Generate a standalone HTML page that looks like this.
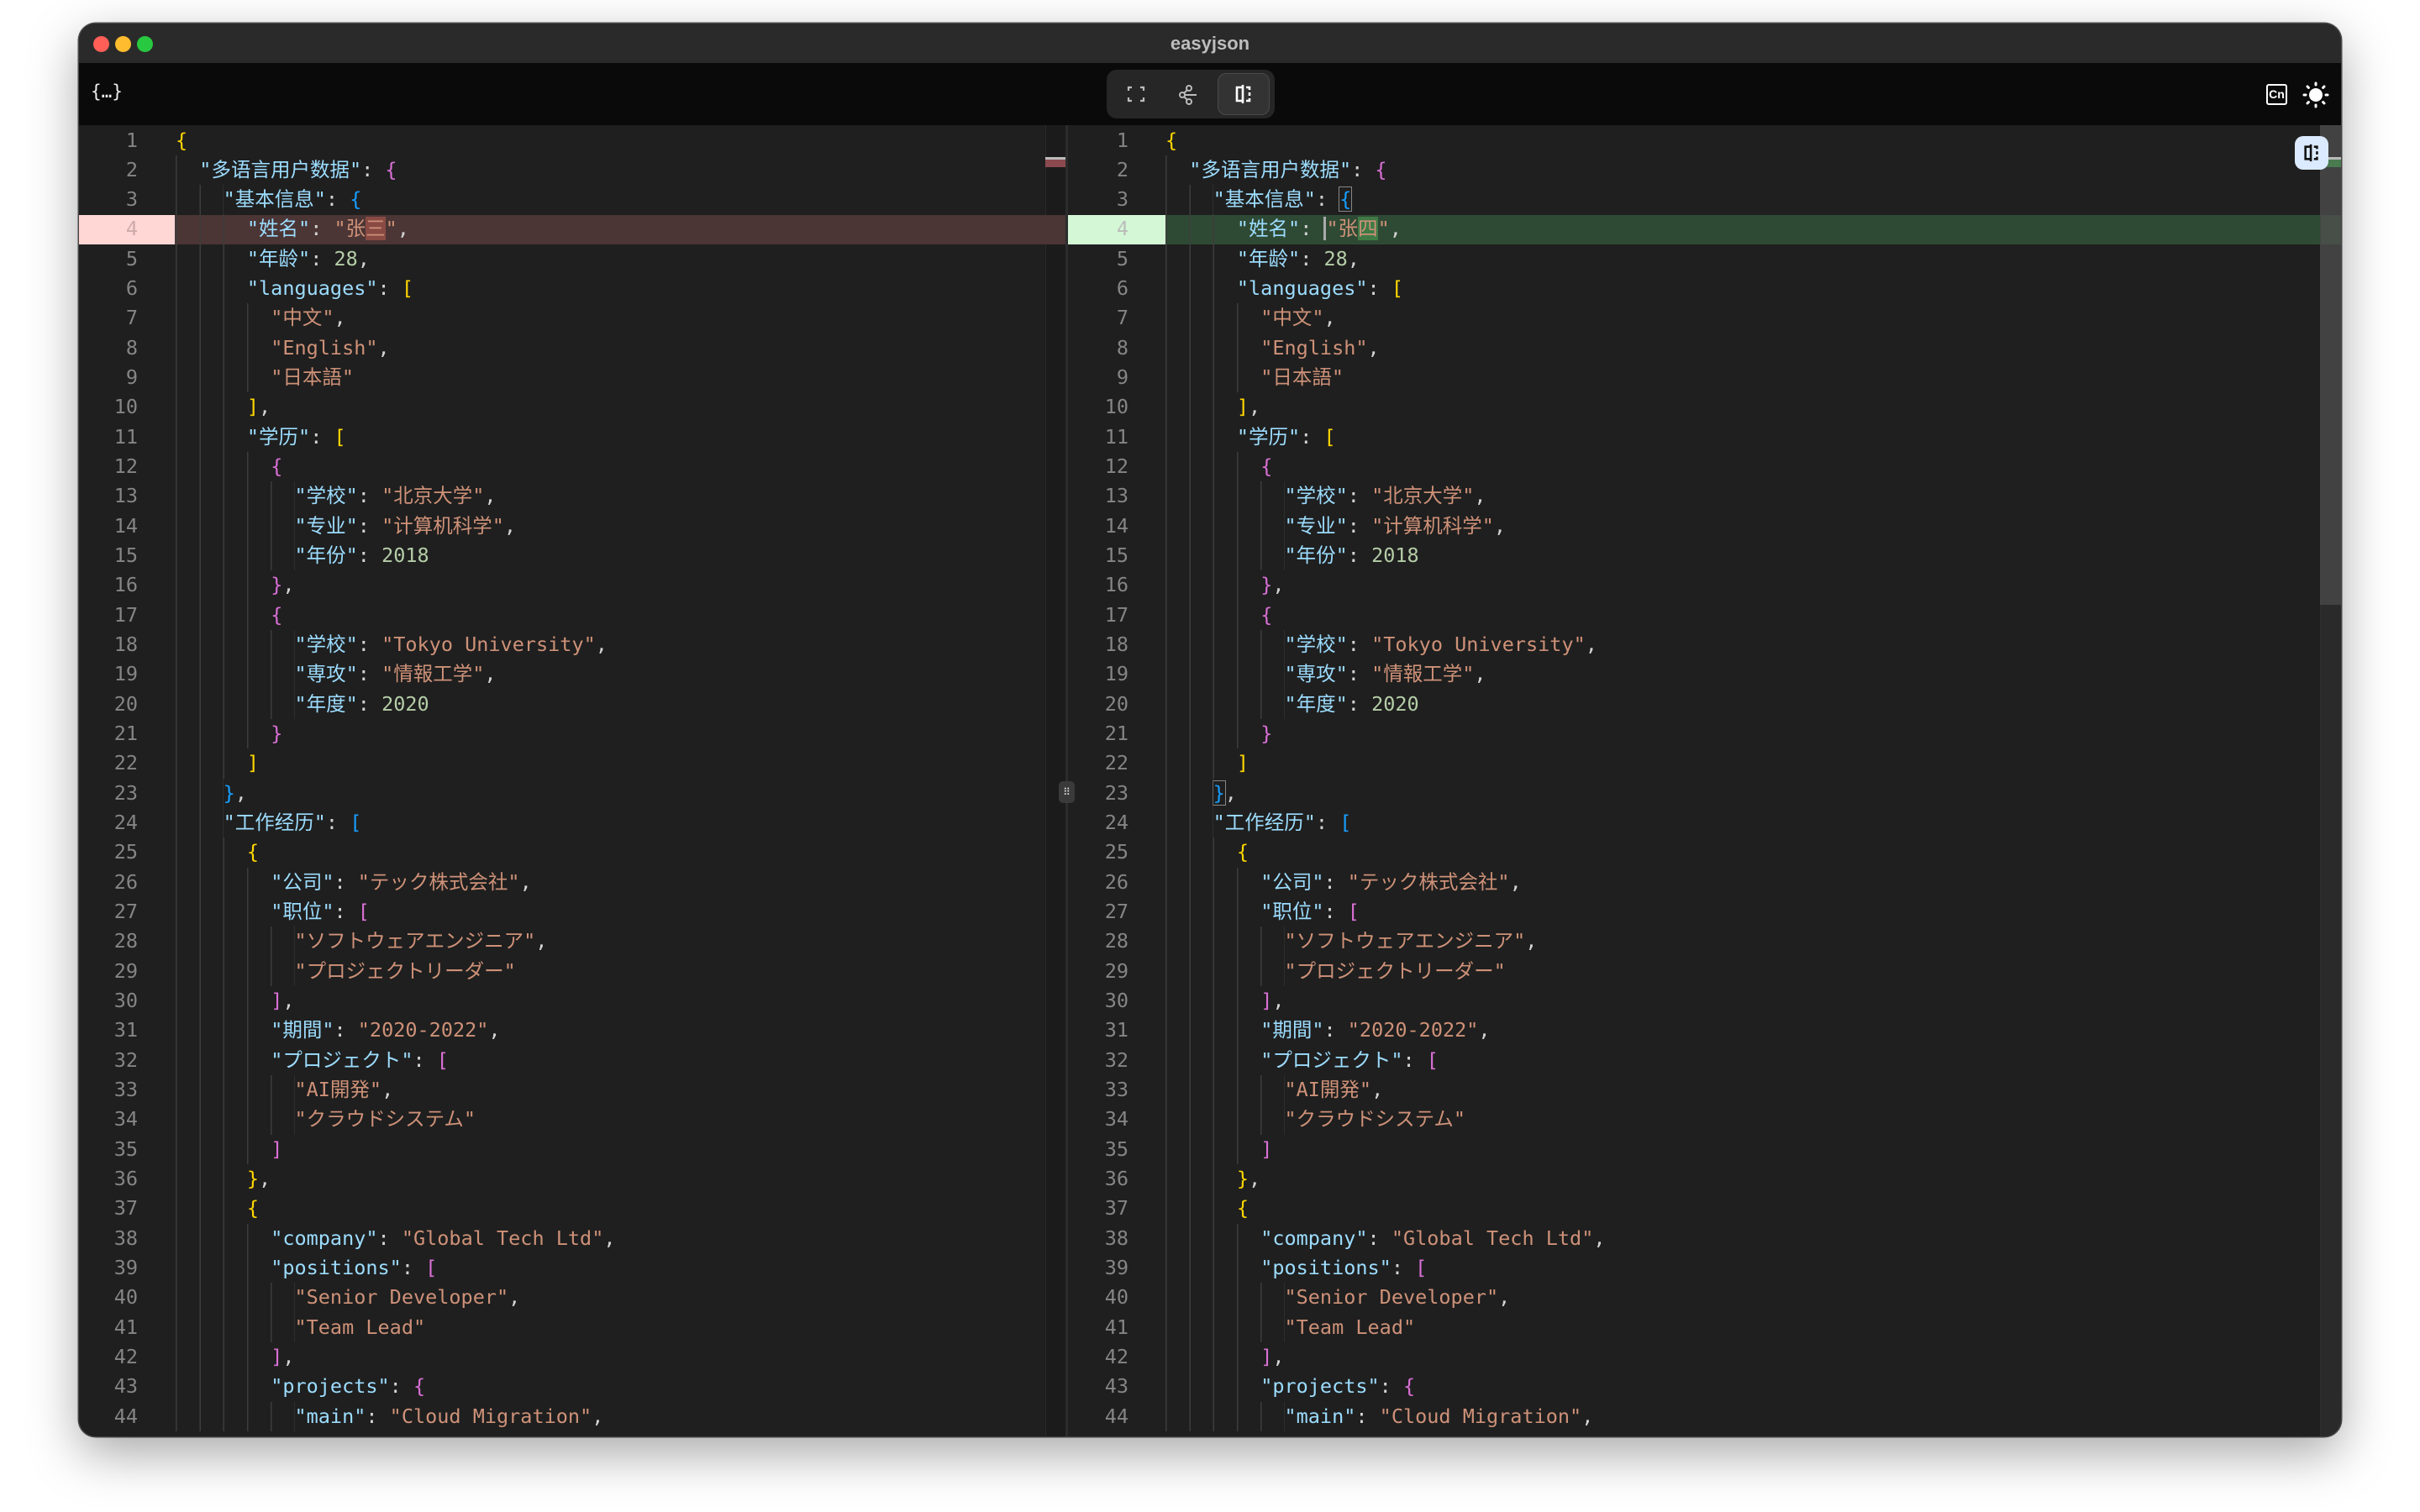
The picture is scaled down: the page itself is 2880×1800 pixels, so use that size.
<!DOCTYPE html>
<html><head><meta charset="utf-8"><style>
*{margin:0;padding:0;box-sizing:border-box}
body{width:2880px;height:1800px;background:#fff;position:relative;overflow:hidden;font-family:"Liberation Sans",sans-serif}
.win{position:absolute;left:94px;top:28px;width:2692px;height:1682px;border-radius:20px;background:#1f1f1f;overflow:hidden;box-shadow:0 20px 60px rgba(0,0,0,.35),0 0 0 1.5px #555}
.title{position:absolute;left:0;top:0;width:100%;height:47px;background:#2a2a2a;text-align:center;color:#bdbdbd;font-weight:bold;font-size:22px;line-height:47px}
.dot{position:absolute;top:15px;width:19px;height:19px;border-radius:50%}
.tb{position:absolute;left:0;top:47px;width:100%;height:74px;background:#0a0a0a}
.seg{position:absolute;left:1223px;top:8px;width:200px;height:58px;border-radius:12px;background:#262626}
.act{position:absolute;left:132px;top:4px;width:62px;height:50px;border-radius:10px;background:#333;border:1.5px solid #4a4a4a}
.pane{position:absolute;top:121px;bottom:0;overflow:hidden}
.gut{position:absolute;left:0;top:0.5px;text-align:right;color:#858585}
.code{position:absolute;top:0.5px}
.gut div,.code div{height:35.33px;line-height:35.33px;font-family:"DejaVu Sans Mono","Noto Sans CJK SC",monospace;font-size:23.5px;white-space:pre}
.code div{position:relative}
.code div::before{content:"";position:absolute;left:0;top:0;bottom:0;width:calc(var(--g,0)*28.3px);background:repeating-linear-gradient(90deg,#3c3c3c 0 1.5px,transparent 1.5px 28.3px)}
.k{color:#9cdcfe}.s{color:#ce9178}.n{color:#b5cea8}.p{color:#d4d4d4}
.b1{color:#ffd700}.b2{color:#da70d6}.b3{color:#179fff}
</style></head><body>
<div class="win">
<div class="title">easyjson
<div class="dot" style="left:17px;background:#ff5f57"></div>
<div class="dot" style="left:43px;background:#febc2e"></div>
<div class="dot" style="left:69px;background:#28c840"></div>
</div>
<div class="tb">
<div style="position:absolute;left:14px;top:22px;color:#eee;font-family:'DejaVu Sans Mono',monospace;font-size:21px">{…}</div>
<div class="seg">
<svg style="position:absolute;left:24px;top:18px" width="22" height="22" viewBox="0 0 22 22" fill="none" stroke="#bbb" stroke-width="2.2"><path d="M2 7V3h4M16 3h4v4M20 15v4h-4M6 19H2v-4"/></svg>
<svg style="position:absolute;left:85px;top:17px" width="26" height="26" viewBox="0 0 26 26" fill="none" stroke="#bbb" stroke-width="2"><circle cx="13" cy="5" r="3"/><circle cx="5" cy="13" r="3"/><circle cx="13" cy="21" r="3"/><path d="M8 13h14M11 7l-4 4M7 15l4 4"/></svg>
<div class="act"><svg style="position:absolute;left:18px;top:11px" width="24" height="26" viewBox="0 0 24 26" fill="none" stroke="#fff" stroke-width="2.6"><path d="M11 2v22M10 5H4v16h6M15 5h4v3M19 11v4M19 18v3h-4"/></svg></div>
</div>
<div style="position:absolute;left:2603px;top:25px;width:25px;height:25px;border:2.5px solid #fff;border-radius:3px;color:#fff;font-size:14px;font-weight:bold;line-height:20px;text-align:center">Cn</div>
<svg style="position:absolute;left:2646px;top:22px" width="32" height="32" viewBox="0 0 32 32"><circle cx="16" cy="16" r="8" fill="#fff"/><g stroke="#fff" stroke-width="3" stroke-linecap="round"><path d="M16 2v2M16 28v2M2 16h2M28 16h2M6 6l1.4 1.4M24.6 24.6L26 26M6 26l1.4-1.4M24.6 7.4L26 6"/></g></svg>
</div>

<!-- LEFT PANE -->
<div class="pane" style="left:0;width:1174px">
<div style="position:absolute;left:1150px;top:0;width:24px;height:100%;background:#1b1b1b;border-left:1px solid #2a2a2a"></div>
<div style="position:absolute;left:0;top:106.5px;width:114px;height:35.3px;background:#ffd7d5"></div>
<div style="position:absolute;left:114px;top:106.5px;width:1060px;height:35.3px;background:#4b3535"></div>
<div style="position:absolute;left:1150px;top:38px;width:24px;height:12px;background:#8a4a4f;border-top:3px solid #bbb"></div>
<div class="gut" style="width:70px">
<div>1</div><div>2</div><div>3</div><div style="color:#caa">4</div><div>5</div><div>6</div><div>7</div><div>8</div><div>9</div><div>10</div><div>11</div><div>12</div><div>13</div><div>14</div><div>15</div><div>16</div><div>17</div><div>18</div><div>19</div><div>20</div><div>21</div><div>22</div><div>23</div><div>24</div><div>25</div><div>26</div><div>27</div><div>28</div><div>29</div><div>30</div><div>31</div><div>32</div><div>33</div><div>34</div><div>35</div><div>36</div><div>37</div><div>38</div><div>39</div><div>40</div><div>41</div><div>42</div><div>43</div><div>44</div>
</div>
<div class="code" style="left:115px">
<div><span class="b1">{</span></div>
<div style="--g:1">  <span class="k">"多语言用户数据"</span><span class="p">: </span><span class="b2">{</span></div>
<div style="--g:2">    <span class="k">"基本信息"</span><span class="p">: </span><span class="b3">{</span></div>
<div style="--g:3">      <span class="k">"姓名"</span><span class="p">: </span><span class="s">"张<span style="background:#8a4a44">三</span>"</span><span class="p">,</span></div>
<div style="--g:3">      <span class="k">"年龄"</span><span class="p">: </span><span class="n">28</span><span class="p">,</span></div>
<div style="--g:3">      <span class="k">"languages"</span><span class="p">: </span><span class="b1">[</span></div>
<div style="--g:4">        <span class="s">"中文"</span><span class="p">,</span></div>
<div style="--g:4">        <span class="s">"English"</span><span class="p">,</span></div>
<div style="--g:4">        <span class="s">"日本語"</span></div>
<div style="--g:3">      <span class="b1">]</span><span class="p">,</span></div>
<div style="--g:3">      <span class="k">"学历"</span><span class="p">: </span><span class="b1">[</span></div>
<div style="--g:4">        <span class="b2">{</span></div>
<div style="--g:5">          <span class="k">"学校"</span><span class="p">: </span><span class="s">"北京大学"</span><span class="p">,</span></div>
<div style="--g:5">          <span class="k">"专业"</span><span class="p">: </span><span class="s">"计算机科学"</span><span class="p">,</span></div>
<div style="--g:5">          <span class="k">"年份"</span><span class="p">: </span><span class="n">2018</span></div>
<div style="--g:4">        <span class="b2">}</span><span class="p">,</span></div>
<div style="--g:4">        <span class="b2">{</span></div>
<div style="--g:5">          <span class="k">"学校"</span><span class="p">: </span><span class="s">"Tokyo University"</span><span class="p">,</span></div>
<div style="--g:5">          <span class="k">"専攻"</span><span class="p">: </span><span class="s">"情報工学"</span><span class="p">,</span></div>
<div style="--g:5">          <span class="k">"年度"</span><span class="p">: </span><span class="n">2020</span></div>
<div style="--g:4">        <span class="b2">}</span></div>
<div style="--g:3">      <span class="b1">]</span></div>
<div style="--g:2">    <span class="b3">}</span><span class="p">,</span></div>
<div style="--g:2">    <span class="k">"工作经历"</span><span class="p">: </span><span class="b3">[</span></div>
<div style="--g:3">      <span class="b1">{</span></div>
<div style="--g:4">        <span class="k">"公司"</span><span class="p">: </span><span class="s">"テック株式会社"</span><span class="p">,</span></div>
<div style="--g:4">        <span class="k">"职位"</span><span class="p">: </span><span class="b2">[</span></div>
<div style="--g:5">          <span class="s">"ソフトウェアエンジニア"</span><span class="p">,</span></div>
<div style="--g:5">          <span class="s">"プロジェクトリーダー"</span></div>
<div style="--g:4">        <span class="b2">]</span><span class="p">,</span></div>
<div style="--g:4">        <span class="k">"期間"</span><span class="p">: </span><span class="s">"2020-2022"</span><span class="p">,</span></div>
<div style="--g:4">        <span class="k">"プロジェクト"</span><span class="p">: </span><span class="b2">[</span></div>
<div style="--g:5">          <span class="s">"AI開発"</span><span class="p">,</span></div>
<div style="--g:5">          <span class="s">"クラウドシステム"</span></div>
<div style="--g:4">        <span class="b2">]</span></div>
<div style="--g:3">      <span class="b1">}</span><span class="p">,</span></div>
<div style="--g:3">      <span class="b1">{</span></div>
<div style="--g:4">        <span class="k">"company"</span><span class="p">: </span><span class="s">"Global Tech Ltd"</span><span class="p">,</span></div>
<div style="--g:4">        <span class="k">"positions"</span><span class="p">: </span><span class="b2">[</span></div>
<div style="--g:5">          <span class="s">"Senior Developer"</span><span class="p">,</span></div>
<div style="--g:5">          <span class="s">"Team Lead"</span></div>
<div style="--g:4">        <span class="b2">]</span><span class="p">,</span></div>
<div style="--g:4">        <span class="k">"projects"</span><span class="p">: </span><span class="b2">{</span></div>
<div style="--g:5">          <span class="k">"main"</span><span class="p">: </span><span class="s">"Cloud Migration"</span><span class="p">,</span></div>
</div>
</div>
<div style="position:absolute;left:1174px;top:121px;width:3px;bottom:0;background:#2c2c2c"></div>
<div style="position:absolute;left:1166px;top:902px;width:19px;height:26px;border-radius:5px;background:#3a3a3a;color:#ddd;font-size:12px;line-height:26px;text-align:center">⠿</div>

<!-- RIGHT PANE -->
<div class="pane" style="left:1177px;width:1515px">
<div style="position:absolute;left:0;top:106.5px;width:116px;height:35.3px;background:#d4f8d6"></div>
<div style="position:absolute;left:116px;top:106.5px;width:1400px;height:35.3px;background:#2f4a34"></div>
<div style="position:absolute;left:1490px;top:0;width:25px;height:100%;background:rgba(60,60,60,.4);border-left:1px solid #2e2e2e"></div>
<div style="position:absolute;left:1490px;top:0;width:25px;height:571px;background:rgba(90,90,90,.5)"></div>
<div style="position:absolute;left:1490px;top:38px;width:25px;height:12px;background:#4a7a4f;border-top:3px solid #bbb"></div>
<div style="position:absolute;left:1460px;top:13px;width:40px;height:40px;border-radius:10px;background:#dbeafe"><svg style="position:absolute;left:9px;top:8px" width="22" height="24" viewBox="0 0 24 26" fill="none" stroke="#111" stroke-width="2.8"><path d="M11 2v22M10 5H4v16h6M15 5h4v3M19 11v4M19 18v3h-4"/></svg></div>
<div class="gut" style="width:72px">
<div>1</div><div>2</div><div>3</div><div style="color:#bbb">4</div><div>5</div><div>6</div><div>7</div><div>8</div><div>9</div><div>10</div><div>11</div><div>12</div><div>13</div><div>14</div><div>15</div><div>16</div><div>17</div><div>18</div><div>19</div><div>20</div><div>21</div><div>22</div><div>23</div><div>24</div><div>25</div><div>26</div><div>27</div><div>28</div><div>29</div><div>30</div><div>31</div><div>32</div><div>33</div><div>34</div><div>35</div><div>36</div><div>37</div><div>38</div><div>39</div><div>40</div><div>41</div><div>42</div><div>43</div><div>44</div>
</div>
<div class="code" style="left:116px">
<div><span class="b1">{</span></div>
<div style="--g:1">  <span class="k">"多语言用户数据"</span><span class="p">: </span><span class="b2">{</span></div>
<div style="--g:2">    <span class="k">"基本信息"</span><span class="p">: </span><span class="b3" style="outline:1.5px solid #888">{</span></div>
<div style="--g:3">      <span class="k">"姓名"</span><span class="p">: </span><span class="s" style="border-left:3px solid #aaa">"张<span style="background:#3f7a45">四</span>"</span><span class="p">,</span></div>
<div style="--g:3">      <span class="k">"年龄"</span><span class="p">: </span><span class="n">28</span><span class="p">,</span></div>
<div style="--g:3">      <span class="k">"languages"</span><span class="p">: </span><span class="b1">[</span></div>
<div style="--g:4">        <span class="s">"中文"</span><span class="p">,</span></div>
<div style="--g:4">        <span class="s">"English"</span><span class="p">,</span></div>
<div style="--g:4">        <span class="s">"日本語"</span></div>
<div style="--g:3">      <span class="b1">]</span><span class="p">,</span></div>
<div style="--g:3">      <span class="k">"学历"</span><span class="p">: </span><span class="b1">[</span></div>
<div style="--g:4">        <span class="b2">{</span></div>
<div style="--g:5">          <span class="k">"学校"</span><span class="p">: </span><span class="s">"北京大学"</span><span class="p">,</span></div>
<div style="--g:5">          <span class="k">"专业"</span><span class="p">: </span><span class="s">"计算机科学"</span><span class="p">,</span></div>
<div style="--g:5">          <span class="k">"年份"</span><span class="p">: </span><span class="n">2018</span></div>
<div style="--g:4">        <span class="b2">}</span><span class="p">,</span></div>
<div style="--g:4">        <span class="b2">{</span></div>
<div style="--g:5">          <span class="k">"学校"</span><span class="p">: </span><span class="s">"Tokyo University"</span><span class="p">,</span></div>
<div style="--g:5">          <span class="k">"専攻"</span><span class="p">: </span><span class="s">"情報工学"</span><span class="p">,</span></div>
<div style="--g:5">          <span class="k">"年度"</span><span class="p">: </span><span class="n">2020</span></div>
<div style="--g:4">        <span class="b2">}</span></div>
<div style="--g:3">      <span class="b1">]</span></div>
<div style="--g:2">    <span class="b3" style="outline:1.5px solid #888">}</span><span class="p">,</span></div>
<div style="--g:2">    <span class="k">"工作经历"</span><span class="p">: </span><span class="b3">[</span></div>
<div style="--g:3">      <span class="b1">{</span></div>
<div style="--g:4">        <span class="k">"公司"</span><span class="p">: </span><span class="s">"テック株式会社"</span><span class="p">,</span></div>
<div style="--g:4">        <span class="k">"职位"</span><span class="p">: </span><span class="b2">[</span></div>
<div style="--g:5">          <span class="s">"ソフトウェアエンジニア"</span><span class="p">,</span></div>
<div style="--g:5">          <span class="s">"プロジェクトリーダー"</span></div>
<div style="--g:4">        <span class="b2">]</span><span class="p">,</span></div>
<div style="--g:4">        <span class="k">"期間"</span><span class="p">: </span><span class="s">"2020-2022"</span><span class="p">,</span></div>
<div style="--g:4">        <span class="k">"プロジェクト"</span><span class="p">: </span><span class="b2">[</span></div>
<div style="--g:5">          <span class="s">"AI開発"</span><span class="p">,</span></div>
<div style="--g:5">          <span class="s">"クラウドシステム"</span></div>
<div style="--g:4">        <span class="b2">]</span></div>
<div style="--g:3">      <span class="b1">}</span><span class="p">,</span></div>
<div style="--g:3">      <span class="b1">{</span></div>
<div style="--g:4">        <span class="k">"company"</span><span class="p">: </span><span class="s">"Global Tech Ltd"</span><span class="p">,</span></div>
<div style="--g:4">        <span class="k">"positions"</span><span class="p">: </span><span class="b2">[</span></div>
<div style="--g:5">          <span class="s">"Senior Developer"</span><span class="p">,</span></div>
<div style="--g:5">          <span class="s">"Team Lead"</span></div>
<div style="--g:4">        <span class="b2">]</span><span class="p">,</span></div>
<div style="--g:4">        <span class="k">"projects"</span><span class="p">: </span><span class="b2">{</span></div>
<div style="--g:5">          <span class="k">"main"</span><span class="p">: </span><span class="s">"Cloud Migration"</span><span class="p">,</span></div>
</div>
</div>
</div>
</body></html>
